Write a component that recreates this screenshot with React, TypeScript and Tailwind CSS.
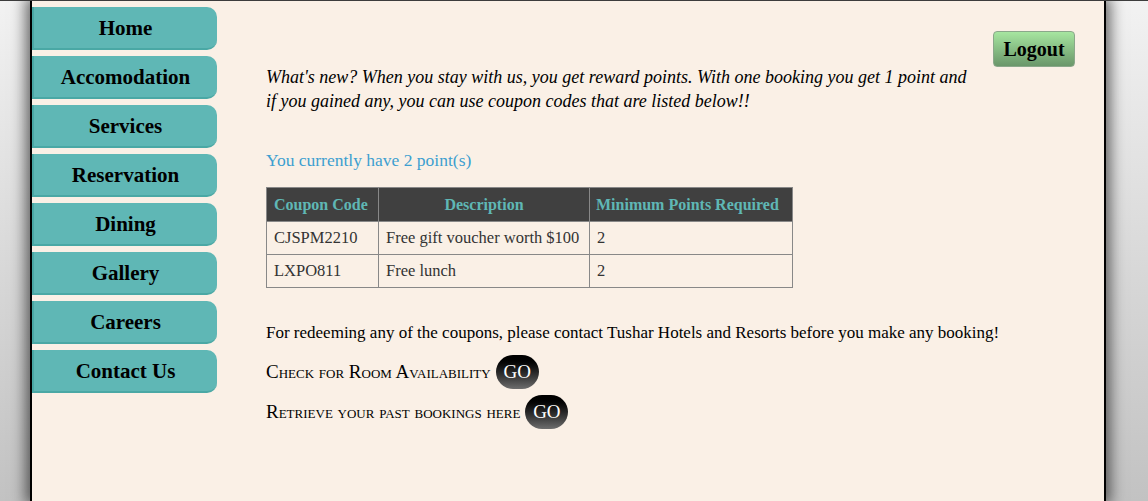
import React from "react";

const navItems = ["Home", "Accomodation", "Services", "Reservation", "Dining", "Gallery", "Careers", "Contact Us"];

export default function App() {
  return (
    <div
      className="relative h-[501px] w-[1148px] overflow-hidden bg-gradient-to-b from-[#f2f2f2] to-[#c2c2c2] border-t border-[#3c3c3c]"
      style={{ fontFamily: '"Liberation Serif", serif' }}
    >
      <div className="ml-[30px] flex h-[500px] w-[1076px] border-x-2 border-black bg-[#faf0e6] shadow-[0_0_14px_4px_rgba(0,0,0,0.6)]">
        <nav className="mt-[6px] flex w-[185px] shrink-0 flex-col gap-[6px]">
          {navItems.map((n) => (
            <div
              key={n}
              className="flex h-[43px] items-center justify-center rounded-r-[10px] border-b-2 border-l-2 border-[#4aa8a5] bg-[#5fb7b5] pt-[3px] text-[21px] font-bold text-black"
            >
              {n}
            </div>
          ))}
        </nav>
        <main className="relative flex-1 pl-[49px] pr-[29px]">
          <div className="flex justify-end pt-[30px]">
            <button className="h-[36px] w-[82px] rounded-[4px] border border-[#8aa88a] bg-gradient-to-b from-[#a6e6a0] to-[#6a976a] text-[20px] font-bold text-black">
              Logout
            </button>
          </div>
          <p className="-mt-[2px] w-[708px] text-[18px] italic leading-[24px] text-black">
            What's new? When you stay with us, you get reward points. With one booking you get 1 point and if you gained any, you can use coupon codes that are listed below!!
          </p>
          <p className="mt-[35px] text-[17.5px] leading-[24px] text-[#3d9fd0]">You currently have 2 point(s)</p>
          <table className="mt-[15px] border-collapse text-[16.5px] text-[#333]">
            <thead>
              <tr className="h-[34px] whitespace-nowrap bg-[#404040] text-[16px] font-bold text-[#5fb7b5]">
                <th className="w-[112px] border border-[#888] px-[7px] text-left">Coupon Code</th>
                <th className="w-[211px] border border-[#888] px-[7px] text-center">Description</th>
                <th className="w-[203px] border border-[#888] px-[6px] text-left">Minimum Points Required</th>
              </tr>
            </thead>
            <tbody>
              <tr className="h-[33px]">
                <td className="border border-[#888] px-[7px]">CJSPM2210</td>
                <td className="whitespace-nowrap border border-[#888] px-[7px]">Free gift voucher worth $100</td>
                <td className="border border-[#888] px-[7px]">2</td>
              </tr>
              <tr className="h-[33px]">
                <td className="border border-[#888] px-[7px]">LXPO811</td>
                <td className="border border-[#888] px-[7px]">Free lunch</td>
                <td className="border border-[#888] px-[7px]">2</td>
              </tr>
            </tbody>
          </table>
          <p className="mt-[33px] text-[17px] leading-[24px] text-black">
            For redeeming any of the coupons, please contact Tushar Hotels and Resorts before you make any booking!
          </p>
          <div className="mt-[10px] flex items-center gap-[5px] text-[19px] text-black [font-variant:small-caps]">
            <span>Check for Room Availability</span>
            <span className="flex h-[34px] w-[43px] items-center justify-center rounded-full bg-gradient-to-b from-black to-[#6e6e6e] text-[19px] text-white [font-variant:normal]">GO</span>
          </div>
          <div className="mt-[6px] flex items-center gap-[5px] text-[19px] text-black [font-variant:small-caps]">
            <span>Retrieve your past bookings here</span>
            <span className="flex h-[34px] w-[43px] items-center justify-center rounded-full bg-gradient-to-b from-black to-[#6e6e6e] text-[19px] text-white [font-variant:normal]">GO</span>
          </div>
        </main>
      </div>
    </div>
  );
}
